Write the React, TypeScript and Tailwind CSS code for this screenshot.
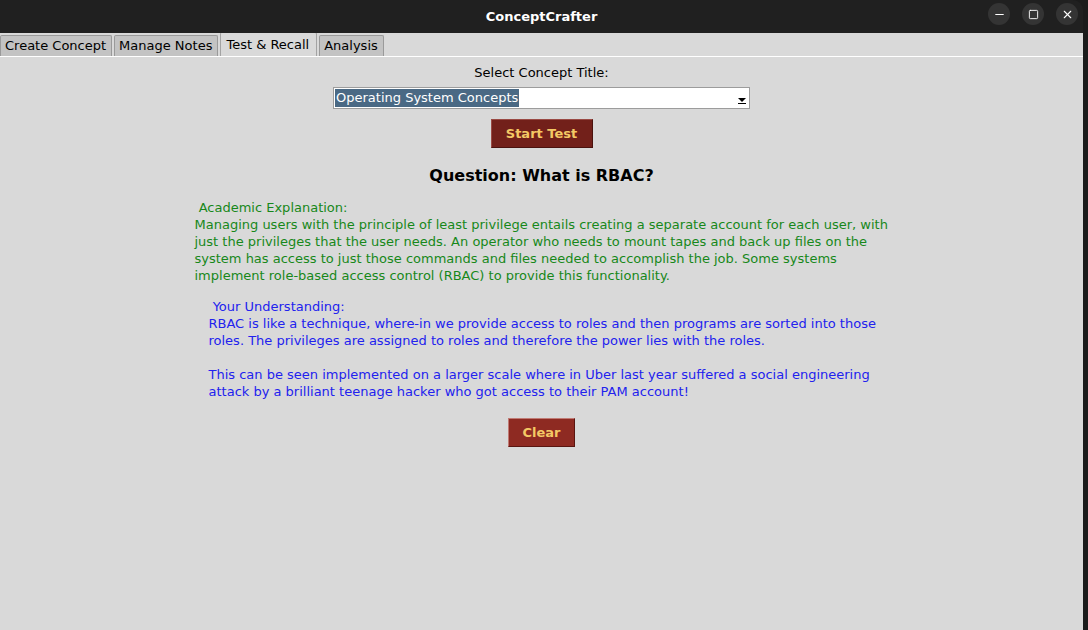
import { Minus, Square, X } from 'lucide-react';

const tabs = ['Create Concept', 'Manage Notes', 'Test & Recall', 'Analysis'];

const academic = [
  'Managing users with the principle of least privilege entails creating a separate account for each user, with',
  'just the privileges that the user needs. An operator who needs to mount tapes and back up files on the',
  'system has access to just those commands and files needed to accomplish the job. Some systems',
  'implement role-based access control (RBAC) to provide this functionality.',
];

const understanding = [
  'RBAC is like a technique, where-in we provide access to roles and then programs are sorted into those',
  'roles. The privileges are assigned to roles and therefore the power lies with the roles.',
  '',
  'This can be seen implemented on a larger scale where in Uber last year suffered a social engineering',
  'attack by a brilliant teenage hacker who got access to their PAM account!',
];

// Tk style window: title bar, notebook tabs, and the "Test & Recall" page.
export default function App() {
  return (
    <div className="flex h-[630px] w-[1088px] overflow-hidden bg-[#1b1b1b] font-['DejaVu_Sans',sans-serif] text-[13px] text-black">
      <div className="flex w-[1083px] flex-col">
        <header className="relative flex h-[33px] shrink-0 items-center justify-center rounded-tr-[10px] bg-[#202020]">
          <span className="text-[13px] font-bold text-white">ConceptCrafter</span>
          <div className="absolute right-[5px] top-[3px] flex gap-[12px]">
            {[Minus, Square, X].map((Icon, i) => (
              <span
                key={i}
                className="flex h-[22px] w-[22px] items-center justify-center rounded-full bg-[#343434] text-white"
              >
                <Icon size={i === 1 ? 11 : 13} strokeWidth={2} />
              </span>
            ))}
          </div>
        </header>

        <div className="flex flex-1 flex-col bg-[#d9d9d9]">
          <nav className="flex h-[24px] shrink-0 items-end gap-[2px] border-b border-white bg-[#d9d9d9]">
            {tabs.map((tab) => {
              const active = tab === 'Test & Recall';
              return (
                <div
                  key={tab}
                  className={[
                    'flex items-center rounded-t-[2px] border border-b-0 pb-[1px] leading-none',
                    active
                      ? 'h-[24px] border-[#a3a3a3] bg-[#d9d9d9] pl-[5px] pr-[7px]'
                      : 'h-[21px] border-[#9a9a9a] bg-[#c3c3c3] pl-[4px] pr-[5px]',
                  ].join(' ')}
                >
                  {tab}
                </div>
              );
            })}
          </nav>

          <main className="flex flex-col items-center">
            <p className="mt-[7px] leading-[17px]">Select Concept Title:</p>

            <div className="mt-[6px] flex h-[22px] w-[417px] items-center border border-[#9c9c9c] bg-white px-[1px]">
              <span className="bg-[#4a6984] px-[1px] leading-[18px] text-white">Operating System Concepts</span>
              <span className="ml-auto flex h-[18px] w-[12px] flex-col items-center justify-end pb-[3px]">
                <span className="h-0 w-0 border-x-[4px] border-t-[4px] border-x-transparent border-t-black" />
                <span className="mt-[1px] h-[1px] w-[8px] bg-black" />
              </span>
            </div>

            <button
              type="button"
              className="mt-[10px] flex h-[29px] w-[102px] items-center justify-center border border-t-[#9a4a44] border-l-[#9a4a44] border-b-[#4a120e] border-r-[#4a120e] bg-[#72201a] font-bold text-[#f4c865]"
            >
              Start Test
            </button>

            <h2 className="mt-[18px] text-[16px] font-bold leading-[20px]">Question: What is RBAC?</h2>

            <div className="mt-[13px] w-[700px] pl-[3px] leading-[17px] text-[#17881a]">
              <p className="whitespace-pre"> Academic Explanation:</p>
              {academic.map((line) => (
                <p key={line} className="whitespace-pre">{line}</p>
              ))}
            </div>

            <div className="mt-[14px] w-[700px] pl-[17px] leading-[17px] text-[#2222ee]">
              <p className="whitespace-pre"> Your Understanding:</p>
              {understanding.map((line, i) => (
                <p key={i} className="h-[17px] whitespace-pre">{line}</p>
              ))}
            </div>

            <button
              type="button"
              className="mt-[18px] flex h-[29px] w-[67px] items-center justify-center border border-t-[#c07a74] border-l-[#c07a74] border-b-[#5a1510] border-r-[#5a1510] bg-[#8e2a22] font-bold text-[#f4c865]"
            >
              Clear
            </button>
          </main>
        </div>
      </div>
    </div>
  );
}
